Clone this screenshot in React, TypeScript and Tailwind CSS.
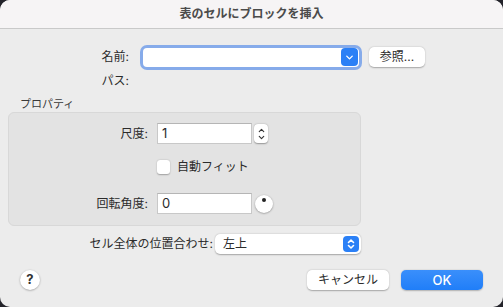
import { ChevronDown, ChevronUp } from 'lucide-react'

const font = { fontFamily: 'Inter, "Noto Sans CJK JP", sans-serif' }

const Chevrons = () => (
  <svg width="8" height="12" viewBox="0 0 8 12" fill="none">
    <path d="M1.5 4.5 L4 2 L6.5 4.5" stroke="white" strokeWidth="1.6" strokeLinecap="round" strokeLinejoin="round" />
    <path d="M1.5 7.5 L4 10 L6.5 7.5" stroke="white" strokeWidth="1.6" strokeLinecap="round" strokeLinejoin="round" />
  </svg>
)

export default function App() {
  return (
    <div className="w-[503px] h-[307px] bg-[#23232a] text-[12px] text-[#2b2b2b]" style={font}>
      <div className="w-full h-full flex flex-col rounded-[10px] bg-[#ececec] overflow-hidden">
        {/* title bar */}
        <div className="h-[29px] shrink-0 flex items-center justify-center bg-[#f6f4f5] border-b border-[#c9c9c9] font-semibold text-[#4b4b4b]">
          表のセルにブロックを挿入
        </div>

        {/* name */}
        <div className="flex items-center h-[20px] mt-[18px]">
          <div className="w-[129px] text-right">名前:</div>
          <div className="ml-[14px] w-[216px] h-[19px] flex items-center justify-end bg-white rounded-[4px] ring-[3px] ring-[#86abea]">
            <div className="w-[17px] h-[18px] mr-px flex items-center justify-center rounded-[4px] bg-[#2b80f6]">
              <ChevronDown size={11} color="white" strokeWidth={3} />
            </div>
          </div>
          <button className="ml-[10px] w-[56px] h-[20px] rounded-[5px] bg-white shadow-[0_0.5px_1.5px_rgba(0,0,0,0.3)] text-[12px] leading-none">
            参照...
          </button>
        </div>

        {/* path */}
        <div className="flex items-center h-[16px] mt-[6px]">
          <div className="w-[129px] text-right">パス:</div>
        </div>

        {/* properties */}
        <div className="h-[14px] mt-[8px] pl-[20px] text-[11px] leading-[14px] text-[#3a3a3a]">プロパティ</div>
        <div className="ml-[8px] w-[353px] mt-[1px] pt-[10px] pb-[11px] rounded-[6px] bg-[#e3e3e3] border border-[#d8d8d8]">
          <div className="flex items-center h-[21px]">
            <div className="w-[139px] text-right">尺度:</div>
            <div className="ml-[9px] w-[95px] h-[21px] flex items-center pl-[4px] bg-white border border-[#c8c8c8] border-t-[#b5b5b5] text-[13px]">
              1
            </div>
            <div className="ml-[2px] w-[14px] h-[19px] flex flex-col items-center justify-center rounded-[4px] bg-white shadow-[0_0.5px_1.5px_rgba(0,0,0,0.35)]">
              <ChevronUp size={9} strokeWidth={3} color="#333" className="-mb-px" />
              <ChevronDown size={9} strokeWidth={3} color="#333" className="-mt-px" />
            </div>
          </div>
          <div className="flex items-center h-[16px] mt-[15px]">
            <div className="ml-[148px] w-[13px] h-[14px] rounded-[3px] bg-white shadow-[0_0.5px_1.5px_rgba(0,0,0,0.3)]" />
            <div className="ml-[7px]">自動フィット</div>
          </div>
          <div className="flex items-center h-[21px] mt-[18px]">
            <div className="w-[139px] text-right">回転角度:</div>
            <div className="ml-[9px] w-[95px] h-[21px] flex items-center pl-[4px] bg-white border border-[#c8c8c8] border-t-[#b5b5b5] text-[13px]">
              0
            </div>
            <div className="ml-[3px] w-[18px] h-[18px] flex justify-center pt-[3px] rounded-full bg-white shadow-[0_0.5px_2px_rgba(0,0,0,0.4)]">
              <div className="w-[4px] h-[4px] rounded-full bg-[#222]" />
            </div>
          </div>
        </div>

        {/* alignment */}
        <div className="flex items-center h-[20px] mt-[8px]">
          <div className="w-[213px] text-right">セル全体の位置合わせ:</div>
          <div className="ml-[2px] w-[146px] h-[20px] flex items-center justify-between pl-[8px] pr-[2px] rounded-[5px] bg-white shadow-[0_0.5px_1.5px_rgba(0,0,0,0.3)]">
            <span>左上</span>
            <div className="w-[16px] h-[16px] flex items-center justify-center rounded-[4px] bg-[#2b80f6]">
              <Chevrons />
            </div>
          </div>
        </div>

        {/* buttons */}
        <div className="flex items-center h-[20px] mt-[16px] pl-[20px] pr-[20px]">
          <div className="w-[20px] h-[20px] flex items-center justify-center rounded-full bg-white shadow-[0_0.5px_2px_rgba(0,0,0,0.35)] font-bold text-[13px] text-[#333]">
            ?
          </div>
          <div className="flex-1" />
          <button className="w-[82px] h-[20px] rounded-[5px] bg-white shadow-[0_0.5px_1.5px_rgba(0,0,0,0.3)] text-[12px] leading-none">
            キャンセル
          </button>
          <button className="ml-[12px] w-[82px] h-[20px] rounded-[5px] bg-gradient-to-b from-[#3a8ffb] to-[#1f7ef8] text-white text-[13px] font-medium leading-none shadow-[0_0.5px_1.5px_rgba(0,0,0,0.25)]">
            OK
          </button>
        </div>
      </div>
    </div>
  )
}
